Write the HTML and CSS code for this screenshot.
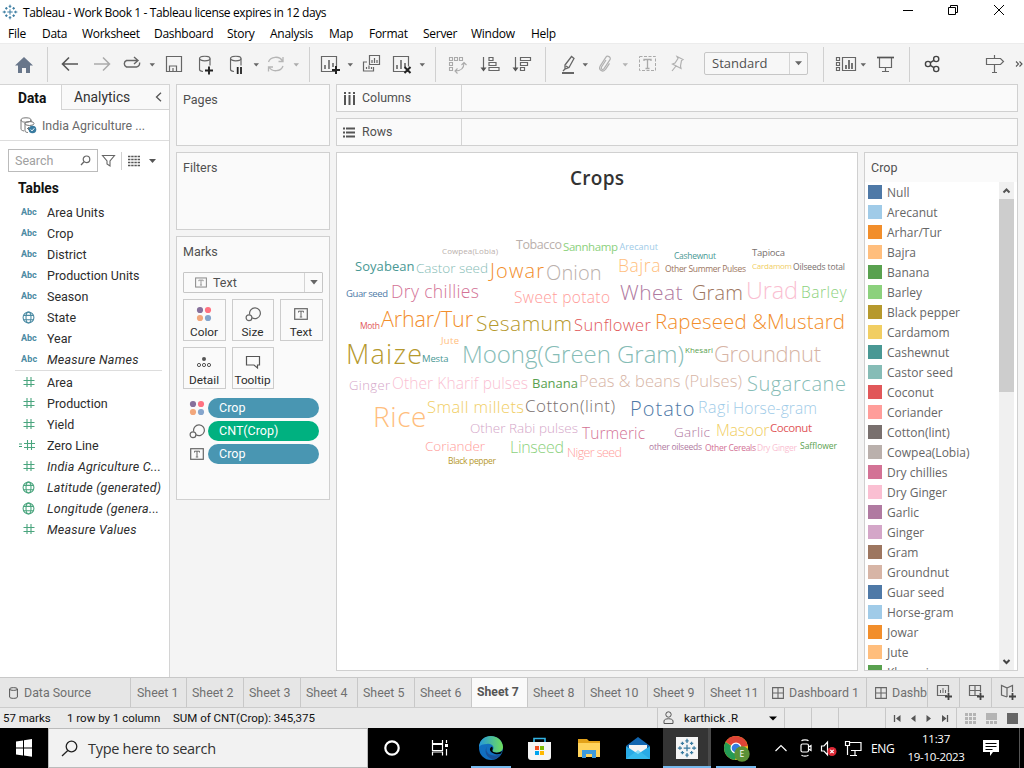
FILE: index.html
```html
<!DOCTYPE html>
<html lang="en">
<head>
<meta charset="utf-8">
<title>Tableau - Work Book 1</title>
<link rel="stylesheet" href="styles.css">
</head>
<body>
<svg class="defs" width="0" height="0">
  <defs>
    <symbol id="tri" viewBox="0 0 6 4"><path d="M0 0h6L3 3.6z" fill="#666"/></symbol>
    <symbol id="chart" viewBox="0 0 22 20"><path d="M16 15.500H1.500v-15h15v10" fill="none" stroke="#666" stroke-width="1.200"/><path d="M5 9v4M9 4v9M13 7v4" stroke="#666" stroke-width="1.600"/></symbol>
    <symbol id="db" viewBox="0 0 16 18"><path d="M1 3v11c0 1 1.500 1.700 3.500 2M11.500 3v7" fill="none" stroke="#666" stroke-width="1.200"/><ellipse cx="6.250" cy="3" rx="5.250" ry="2.300" fill="none" stroke="#666" stroke-width="1.200"/></symbol>
    <symbol id="hash" viewBox="0 0 12 12"><path d="M4.500 1v10M8.500 1v10M1 4.500h11M1 8.500h11" stroke="#4aa57e" stroke-width="1.100" fill="none"/></symbol>
    <symbol id="globe" viewBox="0 0 12 12"><g fill="none" stroke="currentColor"><circle cx="6" cy="6" r="5"/><ellipse cx="6" cy="6" rx="2.300" ry="5"/><path d="M1.500 4h9M1.500 8h9"/></g></symbol>
    <symbol id="dots" viewBox="0 0 16 16"><circle cx="4" cy="4" r="3.100" fill="#86709b"/><circle cx="12" cy="4" r="3.100" fill="#ff7281"/><circle cx="4" cy="12" r="3.100" fill="#f2a77c"/><circle cx="12" cy="12" r="3.100" fill="#85a5cc"/></symbol>
    <symbol id="size" viewBox="0 0 16 16"><g fill="none" stroke="#666" stroke-width="1.200"><path d="M4.700 8.500A5.400 5.400 0 1 1 7 11.800"/><circle cx="4" cy="11.800" r="2.900"/></g></symbol>
    <symbol id="textmark" viewBox="0 0 14 12"><rect x=".7" y=".7" width="12.600" height="10.600" fill="none" stroke="#666" stroke-width="1.200"/><path d="M4.500 4.500V3.200h5v1.300M7 3.200v5.600M5.800 9h2.400" fill="none" stroke="#666"/></symbol>
    <symbol id="dash" viewBox="0 0 12 12"><path d="M.6.6h10.800v10.800H.6zM6 .6v10.800M.6 6h10.800" fill="none" stroke="#666" stroke-width="1.100"/></symbol>
    <symbol id="spark" viewBox="0 0 24 24"><path d="M12 8v8M8 12h8M12 1v5M10 3.500h4M12 18v5M10 20.500h4M1 12h5M3.500 10v4M18 12h5M20.500 10v4M6.500 4.500v4M4.500 6.500h4M17.500 4.500v4M15.500 6.500h4M6.500 15.500v4M4.500 17.500h4M17.500 15.500v4M15.500 17.500h4" fill="none" stroke="#397ba0" stroke-width="1.500"/></symbol>
  </defs>
</svg>
<div class="window">
  <header class="titlebar">
    <span class="app-icon"><svg width="16" height="16"><use href="#spark"/></svg></span>
    <span class="title">Tableau - Work Book 1 - Tableau license expires in 12 days</span>
    <svg class="controls" width="124" height="23" viewBox="900 0 124 23"><g fill="none" stroke="#000"><path d="M903 10.500h10M994 5l10 10M1004 5l-10 10"/><path d="M948.500 7.500h7v7h-7zM950.500 7v-1.500h7v7H956"/></g></svg>
  </header>
  <nav class="menubar">
    <span class="m-file">File</span><span class="m-data">Data</span><span class="m-work">Worksheet</span><span class="m-dash">Dashboard</span><span class="m-story">Story</span><span class="m-an">Analysis</span><span class="m-map">Map</span><span class="m-fmt">Format</span><span class="m-srv">Server</span><span class="m-win">Window</span><span>Help</span>
  </nav>
  <div class="toolbar">
    <svg width="704" height="41" viewBox="0 43 704 41">
      <path d="M47.500 47v35M309.500 47v35M435.500 47v35M545.500 47v35" stroke="#d0d0d0"/>
      <path d="M24 57l9 8.500h-3V73h-4v-5h-4v5h-4v-7.500h-3z" fill="#68768a"/>
      <path d="M78 64H63M69 57.500L62.500 64l6.500 6.500" fill="none" stroke="#555" stroke-width="1.600"/>
      <path d="M94 64h15M103 57.500l6.500 6.500-6.500 6.500" fill="none" stroke="#aaa" stroke-width="1.500"/>
      <path d="M137 60.500h-10.500a3.500 3.500 0 0 0 0 6.500h10a3.500 3.500 0 0 0 3-4.500M134 57l4 3.500-4 3.500" fill="none" stroke="#666" stroke-width="1.400"/>
      <use href="#tri" x="149.500" y="63" width="5.500" height="4"/>
      <path d="M166.500 56.500h15v15h-15zM169.500 71v-5h7v5M173 71v-3" fill="none" stroke="#666" stroke-width="1.200"/>
      <use href="#db" x="198.500" y="55.500" width="16" height="18"/><path d="M205 70.500h8M209 66.500v8" stroke="#222" stroke-width="1.900"/>
      <use href="#db" x="229.500" y="55.500" width="16" height="18"/><path d="M237.700 67v7M241 67v7" stroke="#222" stroke-width="1.800"/>
      <use href="#tri" x="253.500" y="63" width="5.500" height="4"/>
      <g fill="none" stroke="#b5b5b5" stroke-width="1.300"><path d="M268.500 62a7.500 6.500 0 0 1 14-1M283 57v4.500h-4.500M283 66a7.500 6.500 0 0 1-14 1M268.500 71.500V67h4.500"/></g>
      <use href="#tri" x="293.500" y="63" width="5.500" height="4" opacity=".5"/>
      <use href="#chart" x="320" y="56" width="22" height="20"/><path d="M332 70h8M336 66v8" stroke="#222" stroke-width="2"/>
      <use href="#tri" x="347.500" y="63" width="5.500" height="4"/>
      <g fill="none" stroke="#666" stroke-width="1.200"><path d="M369.500 55.500h10v9h-10zM367 62h-3.500v9h10v-4"/><path d="M372 60v3M374.500 58v5M377 60v3M366.500 67v2M369 65.500V69M371.500 67v2"/></g>
      <use href="#chart" x="392" y="56" width="22" height="20"/><path d="M404.500 67l6 6M410.500 67l-6 6" stroke="#222" stroke-width="2"/>
      <use href="#tri" x="419.500" y="63" width="5.500" height="4"/>
      <g fill="none" stroke="#aaa" stroke-width="1.100"><path d="M449.500 57.500h3v3h-3zM454.500 57.500h3v3h-3zM459.500 57.500h3v3h-3zM449.500 62.500h3v3h-3zM449.500 67.500h3v3h-3z"/><path d="M455 71c6 0 9-2 9-8M461.500 65l2.500-2.500 2.500 2.500M457.500 68.500L455 71l2.500 2.500"/></g>
      <g fill="none" stroke="#666" stroke-width="1.200"><path d="M483.500 57v12M515.500 57v12M489 57.500h4v3h-4zM489 62.500h7v3h-7zM489 67.500h10v3h-10zM520.500 57.500h10v3h-10zM520.500 62.500h7v3h-7zM520.500 67.500h4v3h-4z"/></g><path d="M480.500 67.500h6l-3 4zM512.500 67.500h6l-3 4z" fill="#555"/>
      <path d="M565 65l6.500-8.500 2.500 2-5 9-4 1.500zM566 66l3 2M565 69l-2 2" fill="none" stroke="#666" stroke-width="1.300"/><path d="M562 73h12" stroke="#666" stroke-width="2"/>
      <use href="#tri" x="582.500" y="63" width="5.500" height="4"/>
      <path d="M606 60l-4.500 7c-1 2 1.200 3.500 2.500 1.700l6-9c1.500-2.700-2.700-4.700-4.200-2.400l-5.500 8.500c-2.500 4.500 3 7 5.200 3.500l4-6" fill="none" stroke="#b0b0b0" stroke-width="1.200"/>
      <use href="#tri" x="622.500" y="63" width="5.500" height="4" opacity=".45"/>
      <path d="M639.500 56.500h16v14h-16z" fill="none" stroke="#aaa" stroke-dasharray="3 1.500"/><path d="M644 61v-1.500h7V61M647.500 59.500v9M645.500 68.500h4" fill="none" stroke="#aaa" stroke-width="1.300"/>
      <path d="M677 56.500l6 3-1.500 1-1 5.500.5 2.500-8.500-4.500 2.500-1 3-4.500zM676 66l-4 5" fill="none" stroke="#b0b0b0" stroke-width="1.200"/>
    </svg>
    <div class="fit-select"><span>Standard</span><i><svg width="7" height="5"><use href="#tri"/></svg></i></div>
    <svg width="216" height="41" viewBox="808 43 216 41">
      <path d="M823.500 47v35M909.500 47v35" stroke="#d0d0d0"/>
      <path d="M836.500 57.500h3v3h-3zM836.500 62.500h3v3h-3zM836.500 67.500h3v3h-3zM842.500 57.500h13v13h-13z" fill="none" stroke="#666" stroke-width="1.200"/><path d="M846 65v4M849 60v9M852 63v6" stroke="#555" stroke-width="1.600"/>
      <use href="#tri" x="860.500" y="63" width="5.500" height="4"/>
      <path d="M879.500 58v9.500h12V58M885.500 68v4M882 71.500h7" fill="none" stroke="#666" stroke-width="1.200"/><path d="M877 57.500h17" stroke="#555" stroke-width="1.700"/>
      <g fill="none" stroke="#444" stroke-width="1.400"><circle cx="928" cy="64" r="2.600"/><circle cx="936.200" cy="59" r="2.600"/><circle cx="936.200" cy="69" r="2.600"/><path d="M930.300 62.700l3.600-2.300M930.300 65.300l3.600 2.300"/></g>
      <path d="M986.500 58.500h14l3 3-3 3h-14zM994.500 55v3M994.500 65v7.500M992 72.500h5" fill="none" stroke="#666" stroke-width="1.200"/>
      <path d="M1016 61.500l2.500 2.500-2.500 2.500M1019.500 61.500l2.500 2.500-2.500 2.500" fill="none" stroke="#555" stroke-width="1.100"/>
    </svg>
  </div>

  <main class="workspace">
    <aside class="sidebar">
      <div class="side-tabs"><b>Data</b><div><span>Analytics</span><svg width="7" height="10"><path d="M6 .8L1.500 5 6 9.200" fill="none" stroke="#555" stroke-width="1.300"/></svg></div></div>
      <div class="source"><svg width="17" height="17"><g fill="none" stroke="#777"><ellipse cx="6" cy="3" rx="5" ry="2.200"/><path d="M1 3v9c0 1 1 1.500 3 2M5 6v8c0 1 2 1.500 3 1.500M11 3v2"/><ellipse cx="9.500" cy="6.500" rx="4.500" ry="2"/><path d="M7 11.500h3M8.500 10v3"/></g><circle cx="12.500" cy="12.500" r="3.800" fill="#397ba0"/><path d="M10.700 12.500l1.300 1.400 2.300-2.600" fill="none" stroke="#fff"/></svg><span>India Agriculture ...</span></div>
      <div class="search-row">
        <div class="search"><span>Search</span><svg width="11" height="11"><circle cx="6.500" cy="4.300" r="3.300" fill="none" stroke="#666" stroke-width="1.200"/><path d="M4 6.800L1 10" stroke="#666" stroke-width="1.300"/></svg></div>
        <svg width="66" height="20" viewBox="98 150 66 20"><path d="M102.500 154.500h12l-4.500 5.500v5l-3-2v-3z" fill="none" stroke="#666" stroke-width="1.100"/><path d="M121.500 151v18" stroke="#d0d0d0"/><path d="M128 155.500h12M128 158.500h12M128 161.500h12M128 164.500h12" stroke="#555" stroke-width="1.300" stroke-dasharray="2.400 .8"/><path d="M149 158h7l-3.500 4z" fill="#555"/></svg>
      </div>
      <h2>Tables</h2>
      <ul class="fields dims">
        <li><i>Abc</i>Area Units</li><li><i>Abc</i>Crop</li><li><i>Abc</i>District</li><li><i>Abc</i>Production Units</li><li><i>Abc</i>Season</li><li><svg width="13" height="13"><use href="#globe"/></svg>State</li><li><i>Abc</i>Year</li><li class="gen"><i>Abc</i>Measure Names</li>
      </ul>
      <ul class="fields measures">
        <li><svg width="12" height="12"><use href="#hash"/></svg>Area</li><li><svg width="12" height="12"><use href="#hash"/></svg>Production</li><li><svg width="12" height="12"><use href="#hash"/></svg>Yield</li><li><svg class="eq" width="16" height="12"><path d="M0 5h3M0 7.500h3" stroke="#3f9f78"/><use href="#hash" x="4" width="12" height="12"/></svg>Zero Line</li><li class="gen"><svg width="12" height="12"><use href="#hash"/></svg>India Agriculture C...</li><li class="gen"><svg width="13" height="13"><use href="#globe"/></svg>Latitude (generated)</li><li class="gen"><svg width="13" height="13"><use href="#globe"/></svg>Longitude (genera...</li><li class="gen"><svg width="12" height="12"><use href="#hash"/></svg>Measure Values</li>
      </ul>
    </aside>

    <section class="cards">
      <div class="card pages">Pages</div>
      <div class="card filters">Filters</div>
      <div class="card marks">
        <div>Marks</div>
        <div class="mark-type"><svg width="12" height="11"><use href="#textmark" opacity=".75"/></svg><span>Text</span><i><svg width="8" height="5"><use href="#tri"/></svg></i></div>
        <div class="mark-grid">
          <div><svg width="16" height="16"><use href="#dots"/></svg>Color</div>
          <div><svg width="16" height="16"><use href="#size"/></svg>Size</div>
          <div><svg width="14" height="16"><use href="#textmark"/></svg>Text</div>
          <div><svg width="16" height="16"><circle cx="8" cy="5" r="2" fill="#555"/><g fill="none" stroke="#555"><circle cx="3" cy="11" r="1.600"/><circle cx="8" cy="11" r="1.600"/><circle cx="13" cy="11" r="1.600"/></g></svg>Detail</div>
          <div><svg width="16" height="16"><path d="M1.500 2.500h13v8.500h-2v3L9 11H1.500z" fill="none" stroke="#555" stroke-width="1.200"/></svg>Tooltip</div>
        </div>
        <div class="pill-row"><svg width="16" height="16"><use href="#dots"/></svg><span>Crop</span></div>
        <div class="pill-row"><svg width="16" height="16"><use href="#size"/></svg><span class="green">CNT(Crop)</span></div>
        <div class="pill-row"><svg width="14" height="12"><use href="#textmark"/></svg><span>Crop</span></div>
      </div>
    </section>

    <section class="canvas">
      <div class="shelf"><div><svg width="13" height="13"><path d="M2 0v2M6.500 0v2M11 0v2M2 3v10M6.500 3v10M11 3v10" stroke="#555" stroke-width="2"/></svg><span>Columns</span></div></div>
      <div class="shelf"><div><svg width="13" height="11"><path d="M0 1.500h2M0 5.500h2M0 9.500h2M3 1.500H12M3 5.500H12M3 9.500H12" stroke="#555" stroke-width="2"/></svg><span>Rows</span></div></div>
      <div class="view-row">
        <div class="view">
          <svg width="520" height="517" viewBox="337 153 520 517" class="cloud">
            <text x="570" y="185" textLength="54" font-size="19" font-weight="600" fill="#333">Crops</text>
            <g class="small">
            <text x="442" y="254" textLength="56" font-size="8" fill="#bab0ac">Cowpea(Lobia)</text>
            <text x="619.500" y="250" textLength="38.500" font-size="9" fill="#a0cbe8">Arecanut</text>
            <text x="674" y="259" textLength="42" font-size="8.500" fill="#499894">Cashewnut</text>
            <text x="665" y="272" textLength="81" font-size="8.500" fill="#9d7660">Other Summer Pulses</text>
            <text x="752" y="256" textLength="33" font-size="9.500" fill="#79706e">Tapioca</text>
            <text x="752" y="269" textLength="40" font-size="8" fill="#f1ce63">Cardamom</text>
            <text x="793" y="270" textLength="52" font-size="8.500" fill="#79706e">Oilseeds total</text>
            <text x="346" y="297" textLength="42" font-size="9.500" fill="#4e79a7">Guar seed</text>
            <text x="360" y="329" textLength="20" font-size="8.500" fill="#e15759">Moth</text>
            <text x="441" y="344" textLength="18" font-size="9.500" fill="#ffbe7d">Jute</text>
            <text x="422" y="362" textLength="26.500" font-size="9.500" fill="#499894">Mesta</text>
            <text x="685" y="353" textLength="28" font-size="8" fill="#59a14f">Khesari</text>
            <text x="649" y="450" textLength="53" font-size="8.500" fill="#b07aa1">other oilseeds</text>
            <text x="705" y="451" textLength="51" font-size="8.500" fill="#d37295">Other Cereals</text>
            <text x="757" y="451" textLength="40" font-size="8.500" fill="#fabfd2">Dry Ginger</text>
            <text x="800" y="449" textLength="37" font-size="8.500" fill="#59a14f">Safflower</text>
            <text x="448" y="464" textLength="48" font-size="8.500" fill="#b6992d">Black pepper</text>
            <text x="516" y="249" textLength="46" font-size="12.500" fill="#bab0ac">Tobacco</text>
            <text x="563" y="251" textLength="55" font-size="11.500" fill="#8cd17d">Sannhamp</text>
            <text x="355" y="271" textLength="59.500" font-size="13" fill="#499894">Soyabean</text>
            <text x="532" y="388" textLength="46" font-size="13" fill="#59a14f">Banana</text>
            <text x="770" y="432" textLength="42" font-size="11.500" fill="#e15759">Coconut</text>
            </g>
            <g class="large">
            <text x="416" y="273" textLength="72" font-size="13.500" fill="#86bcb6">Castor seed</text>
            <text x="514" y="303" textLength="96" font-size="15.500" fill="#ff9d9a">Sweet potato</text>
            <text x="801" y="298" textLength="45.500" font-size="15.500" fill="#8cd17d">Barley</text>
            <text x="574" y="331" textLength="77" font-size="16.500" fill="#e15759">Sunflower</text>
            <text x="349" y="390" textLength="41" font-size="13" fill="#d4a6c8">Ginger</text>
            <text x="392" y="389" textLength="136" font-size="15.500" fill="#fabfd2">Other Kharif pulses</text>
            <text x="470" y="433" textLength="108" font-size="13.500" fill="#d4a6c8">Other Rabi pulses</text>
            <text x="582" y="439" textLength="63" font-size="15.500" fill="#d37295">Turmeric</text>
            <text x="674" y="437" textLength="36" font-size="13.500" fill="#b07aa1">Garlic</text>
            <text x="425" y="451" textLength="60" font-size="13.500" fill="#ff9d9a">Coriander</text>
            <text x="567" y="457" textLength="55" font-size="12.500" fill="#ff9d9a">Niger seed</text>
            <text x="490" y="278" textLength="54" font-size="20" fill="#f28e2b">Jowar</text>
            <text x="546" y="280" textLength="55.500" font-size="20" fill="#bab0ac">Onion</text>
            <text x="618" y="272" textLength="42.500" font-size="17.500" fill="#ffbe7d">Bajra</text>
            <text x="391" y="298" textLength="88" font-size="17.500" fill="#d37295">Dry chillies</text>
            <text x="620" y="300" textLength="62.500" font-size="21" fill="#b07aa1">Wheat</text>
            <text x="692" y="300" textLength="51" font-size="20" fill="#9d7660">Gram</text>
            <text x="746" y="299" textLength="52" font-size="23.500" fill="#fabfd2">Urad</text>
            <text x="381" y="327" textLength="92" font-size="21.500" fill="#f28e2b">Arhar/Tur</text>
            <text x="476" y="331" textLength="96" font-size="21" fill="#b6992d">Sesamum</text>
            <text x="655" y="329" textLength="190" font-size="20.500" fill="#f28e2b">Rapeseed &amp;Mustard</text>
            <text x="346" y="364" textLength="76" font-size="27" fill="#b6992d">Maize</text>
            <text x="462" y="363" textLength="222" font-size="24" fill="#86bcb6">Moong(Green Gram)</text>
            <text x="714" y="362" textLength="107" font-size="22" fill="#d7b5a6">Groundnut</text>
            <text x="579" y="387" textLength="163" font-size="16.500" fill="#d7b5a6">Peas &amp; beans (Pulses)</text>
            <text x="747" y="391" textLength="99" font-size="20" fill="#86bcb6">Sugarcane</text>
            <text x="373" y="427" textLength="53.500" font-size="28" fill="#ffbe7d">Rice</text>
            <text x="427" y="413" textLength="97" font-size="16.500" fill="#f1ce63">Small millets</text>
            <text x="525" y="412" textLength="90" font-size="17" fill="#79706e">Cotton(lint)</text>
            <text x="630" y="416" textLength="64.500" font-size="20" fill="#4e79a7">Potato</text>
            <text x="698" y="413" textLength="31.500" font-size="16" fill="#a0cbe8">Ragi</text>
            <text x="733" y="414" textLength="84" font-size="15.500" fill="#a0cbe8">Horse-gram</text>
            <text x="716" y="436" textLength="53.500" font-size="16" fill="#f1ce63">Masoor</text>
            <text x="510" y="453" textLength="54" font-size="16" fill="#8cd17d">Linseed</text>
            </g>
          </svg>
        </div>
        <div class="legend">
          <div class="legend-title">Crop</div>
          <div class="legend-body">
            <ul>
              <li><i class="c1"></i>Null</li><li><i class="c2"></i>Arecanut</li><li><i class="c3"></i>Arhar/Tur</li><li><i class="c4"></i>Bajra</li><li><i class="c5"></i>Banana</li><li><i class="c6"></i>Barley</li><li><i class="c7"></i>Black pepper</li><li><i class="c8"></i>Cardamom</li><li><i class="c9"></i>Cashewnut</li><li><i class="c10"></i>Castor seed</li><li><i class="c11"></i>Coconut</li><li><i class="c12"></i>Coriander</li><li><i class="c13"></i>Cotton(lint)</li><li><i class="c14"></i>Cowpea(Lobia)</li><li><i class="c15"></i>Dry chillies</li><li><i class="c16"></i>Dry Ginger</li><li><i class="c17"></i>Garlic</li><li><i class="c18"></i>Ginger</li><li><i class="c19"></i>Gram</li><li><i class="c20"></i>Groundnut</li><li><i class="c1"></i>Guar seed</li><li><i class="c2"></i>Horse-gram</li><li><i class="c3"></i>Jowar</li><li><i class="c4"></i>Jute</li><li><i class="c5"></i>Khesari</li>
            </ul>
            <div class="scroll"><svg width="15" height="17"><path d="M4.500 10.500l3-3 3 3" fill="none" stroke="#555" stroke-width="2"/></svg><div class="thumb"></div><svg width="15" height="17"><path d="M4.500 7l3 3 3-3" fill="none" stroke="#444" stroke-width="2"/></svg></div>
          </div>
        </div>
      </div>
    </section>
  </main>

  <div class="tabs">
    <span class="t-source"><svg width="9" height="12"><path d="M.6 2v8c0 1.800 7.800 1.800 7.800 0V2c0-1.800-7.800-1.800-7.800 0s7.800 1.800 7.800 0" fill="none" stroke="#555"/></svg>Data Source</span>
    <span class="t-a">Sheet 1</span><span>Sheet 2</span><span>Sheet 3</span><span>Sheet 4</span><span>Sheet 5</span><span>Sheet 6</span><span class="active">Sheet 7</span><span>Sheet 8</span><span class="t-10">Sheet 10</span><span>Sheet 9</span><span class="t-11">Sheet 11</span>
    <span class="t-dash"><svg width="12" height="12"><use href="#dash"/></svg>Dashboard 1</span>
    <span class="t-cut"><svg width="12" height="12"><use href="#dash"/></svg>Dashboard 2</span>
    <span class="t-new"><svg width="17" height="17"><path d="M11 11.500H1.500v-10h11v7" fill="none" stroke="#666" stroke-width="1.200"/><path d="M4.500 6v3M7 4v5M9.500 6v3" stroke="#666"/><path d="M9 12.500h7M12.500 9v7" stroke="#444" stroke-width="1.800"/></svg></span>
    <span class="t-new"><svg width="17" height="17"><path d="M11 11.500H1.500v-10h11v7M7 1.500v10M1.500 6.500h11" fill="none" stroke="#666" stroke-width="1.200"/><path d="M9 12.500h7M12.500 9v7" stroke="#444" stroke-width="1.800"/></svg></span>
    <span class="t-new"><svg width="17" height="17"><path d="M7 13V4L1.500 1.500V11L7 13M7 4l5.500-2.500V8" fill="none" stroke="#666" stroke-width="1.200"/><path d="M9 12.500h7M12.500 9v7" stroke="#444" stroke-width="1.800"/></svg></span>
  </div>
  <div class="status">
    <span class="s1">57 marks</span><span class="s2">1 row by 1 column</span><span class="s3">SUM of CNT(Crop): 345,375</span>
    <div class="user"><svg width="12" height="14"><circle cx="5.500" cy="3.500" r="2.700" fill="none" stroke="#555"/><path d="M1 12.500V10c0-3 9-3 9 0v2.500z" fill="none" stroke="#555"/></svg><span>karthick .R</span><svg width="8" height="5"><path d="M0 .5h8L4 4.500z"/></svg></div>
    <i></i><i></i><i class="wide"></i>
    <svg width="71" height="21" viewBox="886 707 71 21"><path d="M956.500 707v21" stroke="#c8c8c8"/><path d="M894.500 714v7M947.500 714v7" stroke="#555" stroke-width="1.300"/><path d="M900.500 714v7l-4.500-3.500zM915.500 714v7l-4.500-3.500zM926.500 714v7l4.500-3.500zM942 714v7l4.500-3.500z" fill="#555"/></svg>
    <svg width="67" height="21" viewBox="957 707 67 21"><path d="M965 713.500h11M965 717.500h11M965 721.500h11" stroke="#b4b4b4" stroke-width="3" stroke-dasharray="3 1"/><path d="M986 712h11v7h-11z" fill="#b4b4b4"/><path d="M986 721.500h11" stroke="#b4b4b4" stroke-width="3" stroke-dasharray="3 1"/><path d="M1007 712h11v11h-11z" fill="#666"/></svg>
  </div>
  <footer class="taskbar">
    <svg class="start" width="48" height="40"><path d="M16 13.500l7-1v7h-7zM24 12.300l8-1.200v8.400h-8zM16 20.500h7v7l-7-1zM24 20.500h8v8.300l-8-1.200z" fill="#fff"/></svg>
    <div class="win-search"><svg width="17" height="17"><circle cx="10.500" cy="6.500" r="5.300" fill="none" stroke="#222" stroke-width="1.300"/><path d="M6.800 10.500L1 16" stroke="#222" stroke-width="1.300"/></svg>Type here to search</div>
    <svg class="apps" width="407" height="40" viewBox="368 728 407 40">
      <defs>
        <linearGradient id="edge" x2="1"><stop stop-color="#2497dc"/><stop offset="1" stop-color="#70df5a"/></linearGradient>
      </defs>
      <circle cx="392" cy="748" r="6.700" fill="none" stroke="#fff" stroke-width="2.200"/>
      <path d="M432.500 740v3.500h10V740M432.500 755.500V752h10v3.500M432.500 744.500h10v6h-10zM446.500 740v3M446.500 749v6.500" fill="none" stroke="#fff" stroke-width="1.200"/><path d="M445 744h3v3h-3z" fill="#fff"/>
      <circle cx="491" cy="748" r="12" fill="#116fc0"/><path d="M479 747c1-15 23-14 24 0 0 6-8 7-11 4 4-3 0-8-5-7-4 0-7 1-8 3z" fill="url(#edge)"/><path d="M488 745c-5 6 2 14 13 9-1.500 2.500-4 4.500-7 5.500-8-1-11-9-6-14.500z" fill="#185199"/><path d="M492 746.500c2 2.500-1 4.500 1.500 5.500 3 1.300 7 .5 9-1.500l-1.500 3c-4 1.800-10 0-11-3.500-.3-1.500.5-2.500 2-3.500z" fill="#000"/>
      <path d="M471 768h40" stroke="#76b9ed" stroke-width="4"/>
      <path d="M534 742v-3.500h11v3.500" fill="none" stroke="#33b5e5" stroke-width="1.600"/><path d="M528 742h23v15q0 3-3 3h-17q-3 0-3-3z" fill="#f5f5f5"/><path d="M535 746h4v4h-4z" fill="#f25022"/><path d="M540 746h4v4h-4z" fill="#7fba00"/><path d="M535 751h4v4h-4z" fill="#00a4ef"/><path d="M540 751h4v4h-4z" fill="#ffb900"/>
      <path d="M578 739h9l2 2h11v4h-22z" fill="#e3a21a"/><path d="M578 743h22v14h-22z" fill="#ffd35c"/><path d="M582 758v-8h14v8h-4v-4h-6v4z" fill="#3e9bdc"/>
      <path d="M626 746l12-9 12 9-12 8z" fill="#1266b0"/><path d="M629 745h18v4l-9 6-9-6z" fill="#f4f4f4"/><path d="M626 746l12 8 12-8v13h-24z" fill="#29abe6"/><path d="M626 759l12-9 12 9z" fill="#41c7f2" opacity=".6"/>
      <path d="M663 728h45v40h-45z" fill="#343434"/><path d="M708 728h3v40h-3z" fill="#4a4a4a"/><path d="M676 737h22v22h-22z" fill="#f5f5f5"/><use href="#spark" x="677" y="738" width="20" height="20"/><path d="M663 768h48" stroke="#76b9ed" stroke-width="4"/>
      <circle cx="736" cy="748" r="12" fill="#f9c51d"/><path d="M736 748l-10.400-6A12 12 0 0 1 747.800 746z" fill="#df4437"/><path d="M725.600 742A12 12 0 0 0 735 760l4-9z" fill="#249b55"/><circle cx="736" cy="748" r="5.500" fill="#fff"/><circle cx="736" cy="748" r="4.300" fill="#347de0"/><circle cx="742" cy="754" r="7.700" fill="#5b9137"/><text x="739.500" y="757" font-size="8.500" fill="#fff">E</text><path d="M716 768h40" stroke="#76b9ed" stroke-width="4"/>
    </svg>
    <svg class="tray" width="91" height="40" viewBox="775 728 91 40"><g fill="none" stroke="#fff" stroke-width="1.200"><path d="M775.500 751l5.500-5.500 5.500 5.500"/><rect x="801" y="744" width="7.500" height="8" rx="1.500"/><path d="M808.500 747l2.500-1.500v5L808.500 749M801.500 741c1-1.500 6-1.500 7 0M801.500 755c1 1.500 6 1.500 7 0M821.500 746h2.500l3.500-4v13l-3.500-4h-2.500zM849 742.500h12v8h-10M845.500 741.500h4v4h-4zM847.500 746v9M850 755.500h7M855 751v4"/></g><circle cx="832" cy="751.500" r="4.500" fill="#dc2835"/><path d="M830.300 749.800l3.400 3.400M833.700 749.800l-3.400 3.400" stroke="#fff" stroke-width="1.200"/></svg>
    <span class="lang">ENG</span>
    <div class="clock"><span>11:37</span><span>19-10-2023</span></div>
    <svg class="note" width="41" height="40" viewBox="983 728 41 40"><path d="M983 740h16v12h-6l-3 4v-4h-7z" fill="#fff"/><path d="M985.500 743.500h11M985.500 746.500h11M985.500 749.500h7" stroke="#000" stroke-width="1.100"/><path d="M1019.500 728v40" stroke="#555"/></svg>
  </footer>
</div>
</body>
</html>
```
FILE: styles.css
```css
* { box-sizing: border-box; }
body { margin: 0; }
.defs { position: absolute; }
svg { display: block; flex: none; }
ul { list-style: none; margin: 0; padding: 0; }
i { font-style: normal; }
.window { width: 1024px; height: 768px; overflow: hidden; display: flex; flex-direction: column; background: #f4f4f4; font-family: Roboto, sans-serif; font-size: 12.5px; color: #505050; white-space: nowrap; }
.titlebar { height: 23px; flex: none; display: flex; align-items: center; background: #fff; color: #000; font: 12px "Open Sans", sans-serif; letter-spacing: -.37px; }
.app-icon { width: 20px; padding-left: 2px; }
.title { padding-left: 3px; padding-top: 1px; }
.controls { margin-left: auto; }
.menubar { height: 20px; flex: none; display: flex; align-items: center; padding: 1px 0 0 8px; background: #fff; color: #000; font: 12px "Open Sans", sans-serif; letter-spacing: -.28px; }
.m-file { width: 34px; } .m-data { width: 40px; } .m-work { width: 72px; } .m-dash { width: 73px; } .m-story { width: 43px; } .m-an { width: 59px; } .m-map { width: 40px; } .m-fmt { width: 54px; } .m-srv { width: 48px; } .m-win { width: 60px; }
.toolbar { height: 41px; flex: none; display: flex; align-items: center; box-shadow: inset 0 1px #ececec; }
.fit-select { width: 104px; height: 23px; display: flex; align-items: center; justify-content: space-between; border: 1px solid #c6c6c6; border-radius: 2px; padding-left: 7px; background: #f7f7f7; font: 13px "Open Sans", sans-serif; color: #505050; }
.fit-select span { padding-bottom: 2px; }
.fit-select i, .mark-type i { width: 18px; height: 100%; border-left: 1px solid #d4d4d4; display: flex; align-items: center; justify-content: center; }

.workspace { height: 593px; flex: none; display: flex; }
.sidebar { width: 170px; flex: none; border-right: 1px solid #d4d4d4; background: #fff; }
.side-tabs { height: 26px; display: flex; font-size: 13.8px; color: #111; }
.side-tabs b { width: 61px; display: flex; align-items: center; padding-left: 18px; font-weight: 700; font-size: 13.8px; border-top: 1px solid #d4d4d4; }
.side-tabs div { flex: 1; display: flex; align-items: center; justify-content: space-between; padding: 0 7px 0 12px; border: 1px solid #d4d4d4; border-right: 0; background: #f9f9f9; color: #333; }
.source { height: 31px; display: flex; align-items: center; gap: 5px; padding-left: 20px; border-bottom: 1px solid #ddd; color: #6a6a6a; font-size: 12.4px; }
.search-row { display: flex; align-items: center; padding: 8px 0 0 8px; }
.search { width: 90px; height: 23px; display: flex; align-items: center; justify-content: space-between; padding: 0 6px; border: 1px solid #bbb; color: #a0a0a0; font-size: 12.5px; }
.sidebar h2 { margin: 0; padding: 7px 0 0 18px; height: 29px; line-height: 18px; font-size: 13.8px; font-weight: 700; color: #111; }
.fields li { height: 21px; display: flex; align-items: center; padding-left: 47px; padding-top: 1px; font-size: 12.5px; color: #2c2c2c; }
.fields i { width: 26px; margin-left: -26px; font-size: 9px; font-weight: 700; color: #4b8ba3; }
.fields svg { width: 13px; margin-left: -25px; margin-right: 12px; color: #4b8ba3; }
.fields .eq { width: 16px; margin-left: -28px; margin-right: 12px; }
.dims { height: 169px; }
.measures { margin: 0 7px 0 15px; border-top: 1px solid #ddd; }
.measures li { padding-left: 32px; }
.fields.measures svg { color: #4aa57e; }
.fields .gen { font-style: italic; letter-spacing: .24px; }

.cards { width: 154px; margin-left: 6px; flex: none; display: flex; flex-direction: column; gap: 6px; }
.card { border: 1px solid #d0d0d0; background: #fafafa; padding: 7px 6px; line-height: 15px; }
.pages { height: 62px; } .filters { height: 78px; } .marks { height: 264px; }
.mark-type { height: 21px; margin: 13px 0 6px; display: flex; align-items: center; border: 1px solid #c6c6c6; border-radius: 1px; padding-left: 11px; }
.mark-type span { padding-left: 6px; flex: 1; }
.mark-grid { display: grid; grid-template-columns: 43px 42px 43px; gap: 6px; color: #2c2c2c; font-size: 11.8px; }
.mark-grid div { height: 42px; border: 1px solid #ccc; display: flex; flex-direction: column; align-items: center; padding-top: 6px; padding-right: 1px; line-height: 21px; }
.pill-row { display: flex; align-items: center; width: 136px; height: 20px; margin-top: 3px; padding-left: 6px; }
.mark-grid + .pill-row { margin-top: 9px; }
.pill-row svg { width: 16px; }
.pill-row span { width: 111px; height: 20px; margin-left: 3px; border-radius: 10px; background: #4996b2; color: #fff; padding-left: 11px; line-height: 20px; }
.pill-row .green { background: #00b180; }

.canvas { width: 682px; margin-left: 6px; display: flex; flex-direction: column; gap: 6px; }
.shelf { height: 28px; flex: none; display: flex; border: 1px solid #d0d0d0; background: #fafafa; }
.shelf div { width: 125px; display: flex; align-items: center; gap: 6px; padding-left: 6px; border-right: 1px solid #d4d4d4; font-size: 12.4px; }
.shelf span { padding-bottom: 1px; }
.view-row { display: flex; gap: 6px; height: 519px; }
.view { width: 522px; border: 1px solid #d0d0d0; background: #fff; }
.cloud { font-family: "Open Sans", sans-serif; }
.large { font-weight: 300; }
.small { font-weight: 400; }
.legend { width: 154px; border: 1px solid #d0d0d0; background: #fff; display: flex; flex-direction: column; overflow: hidden; }
.legend-title { height: 29px; flex: none; background: #fafafa; line-height: 30px; padding-left: 6px; }
.legend-body { height: 488px; display: flex; justify-content: space-between; overflow: hidden; padding-right: 3px; }
.legend li { height: 20px; display: flex; align-items: center; padding-left: 3px; font: 12px "Open Sans", sans-serif; color: #666; }
.legend li i { width: 14px; height: 14px; margin-right: 5px; }
.c1 { background: #4e79a7; } .c2 { background: #a0cbe8; } .c3 { background: #f28e2b; } .c4 { background: #ffbe7d; } .c5 { background: #59a14f; }
.c6 { background: #8cd17d; } .c7 { background: #b6992d; } .c8 { background: #f1ce63; } .c9 { background: #499894; } .c10 { background: #86bcb6; }
.c11 { background: #e15759; } .c12 { background: #ff9d9a; } .c13 { background: #79706e; } .c14 { background: #bab0ac; } .c15 { background: #d37295; }
.c16 { background: #fabfd2; } .c17 { background: #b07aa1; } .c18 { background: #d4a6c8; } .c19 { background: #9d7660; } .c20 { background: #d7b5a6; }
.scroll { width: 15px; background: #f0f0f0; display: flex; flex-direction: column; }
.thumb { height: 194px; background: #cdcdcd; margin-bottom: 261px; }

.tabs { height: 30px; flex: none; display: flex; background: #e6e6e6; border-top: 1px solid #c8c8c8; color: #707070; font-size: 12.4px; }
.tabs span { width: 57px; flex: none; display: flex; align-items: center; padding-left: 5px; border-right: 1px solid #c8c8c8; overflow: hidden; }
.tabs .t-source { width: 131px; padding-left: 9px; gap: 6px; }
.tabs .t-a { width: 56px; padding-left: 6px; }
.tabs .active { background: #fafafa; font-weight: 700; font-size: 12.2px; color: #555; width: 56px; padding-bottom: 2px; }
.tabs .t-10 { width: 63px; } .tabs .t-11 { width: 60px; }
.tabs .t-dash { width: 102px; padding-left: 7px; gap: 5px; }
.tabs .t-cut { width: 61px; padding-left: 8px; gap: 5px; }
.tabs .t-new { width: 32px; padding-left: 8px; }
.tabs .t-new:last-child { border: 0; }
.status { height: 21px; flex: none; display: flex; align-items: center; background: #eaeaea; border-top: 1px solid #ccc; color: #111; font-size: 11.5px; padding-left: 3px; }
.s1 { width: 64px; } .s2 { width: 106px; } .s3 { width: 484px; }
.user { width: 128px; height: 21px; display: flex; align-items: center; border: solid #c8c8c8; border-width: 0 1px; padding-left: 5px; flex: none; }
.user span { width: 94px; padding-left: 9px; }
.status i { width: 27px; height: 21px; border-right: 1px solid #c8c8c8; flex: none; }
.status .wide { width: 47px; }
.taskbar { height: 40px; flex: none; display: flex; align-items: center; background: #000; color: #fff; font-family: "Open Sans", sans-serif; }
.win-search { width: 320px; height: 40px; display: flex; align-items: center; gap: 10px; padding-left: 12px; background: #f2f2f2; border: 1px solid #bbb; color: #333; font-size: 14.5px; letter-spacing: -.3px; }
.lang { width: 33px; padding-left: 5px; font-size: 12px; letter-spacing: -.4px; }
.clock { width: 75px; display: flex; flex-direction: column; align-items: center; font-size: 11.5px; line-height: 18px; letter-spacing: -.3px; }
.clock span { padding-right: 1px; }
.note { margin-left: auto; }
```
